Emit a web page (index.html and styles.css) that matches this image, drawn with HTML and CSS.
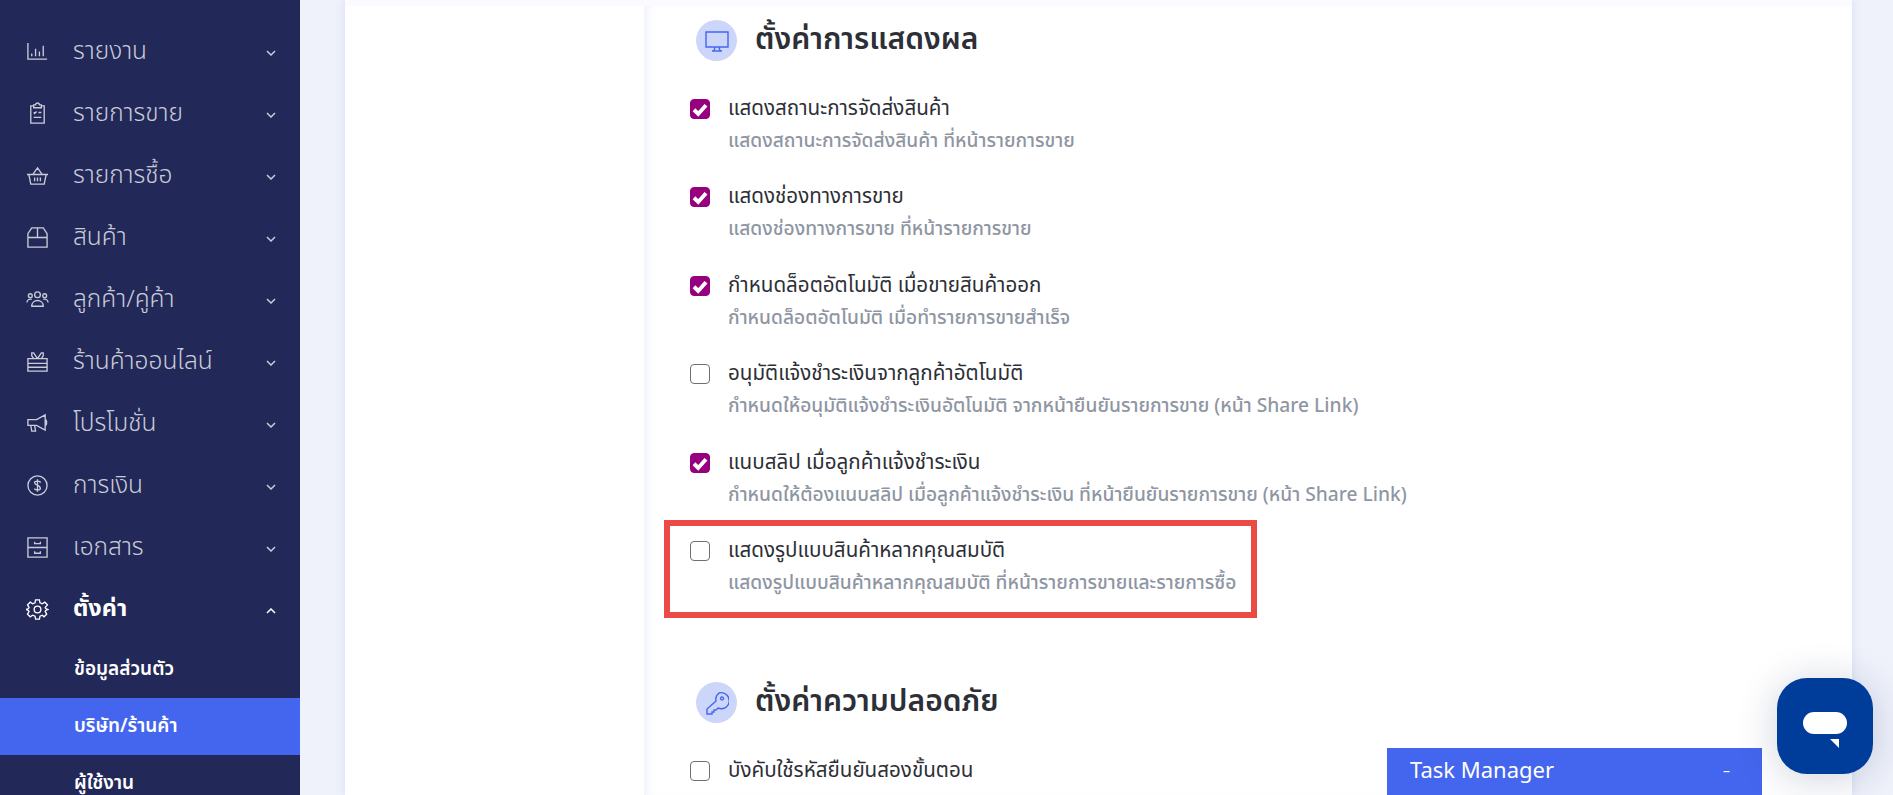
FILE: index.html
```html
<!DOCTYPE html>
<html lang="th">
<head>
  <meta charset="UTF-8" />
  <title>ตั้งค่า</title>
  <link rel="stylesheet" href="styles.css">
</head>
<body>
  <aside class="sidebar">
    <a class="nav-item"><svg class="nav-icon" viewBox="0 0 24 24"><path d="M2 3v17h20M6 17v-3M10 17V9M14 17v-5M18 17V6"/></svg><span class="nav-label">รายงาน</span><svg class="chev" viewBox="0 0 10 6"><path d="M1 1l4 4 4-4"/></svg></a>
    <a class="nav-item"><svg class="nav-icon" viewBox="0 0 24 24"><path d="M8 4H5v18h14V4h-3M8 3h2a2 2 0 0 1 4 0h2v3H8zM8 11l1 1 2-2M13 11h3M8 16h8"/></svg><span class="nav-label">รายการขาย</span><svg class="chev" viewBox="0 0 10 6"><path d="M1 1l4 4 4-4"/></svg></a>
    <a class="nav-item"><svg class="nav-icon" viewBox="0 0 24 24"><path d="M1 11h22M3 11l2 10h14l2-10M7 11l5-7 5 7M9 14v4M12 14v4M15 14v4"/></svg><span class="nav-label">รายการชื้อ</span><svg class="chev" viewBox="0 0 10 6"><path d="M1 1l4 4 4-4"/></svg></a>
    <a class="nav-item"><svg class="nav-icon" viewBox="0 0 24 24"><path d="M2 12h20M6 2h12l4 6v14H2V8zM12 2v10"/></svg><span class="nav-label">สินค้า</span><svg class="chev" viewBox="0 0 10 6"><path d="M1 1l4 4 4-4"/></svg></a>
    <a class="nav-item"><svg class="nav-icon wide" viewBox="0 0 24 24"><circle cx="12" cy="7" r="3"/><circle cx="4.500" cy="8" r="2"/><circle cx="19.500" cy="8" r="2"/><path d="M6 19c0-8 12-8 12 0zM1 15c0-3 3-4 5-3M23 15c0-3-3-4-5-3"/></svg><span class="nav-label">ลูกค้า/คู่ค้า</span><svg class="chev" viewBox="0 0 10 6"><path d="M1 1l4 4 4-4"/></svg></a>
    <a class="nav-item"><svg class="nav-icon" viewBox="0 0 24 24"><path d="M2 9h20v13H2zM2 14h20M2 18h20M12 9L8 3H6v3l2 3M12 9l4-6h2v3l-2 3"/></svg><span class="nav-label">ร้านค้าออนไลน์</span><svg class="chev" viewBox="0 0 10 6"><path d="M1 1l4 4 4-4"/></svg></a>
    <a class="nav-item"><svg class="nav-icon" viewBox="0 0 24 24"><path d="M2 8h9l9-5v16l-9-5H2zM5 14l1 6h4l-1-6M20 8c2 0 2 6 0 6"/></svg><span class="nav-label">โปรโมชั่น</span><svg class="chev" viewBox="0 0 10 6"><path d="M1 1l4 4 4-4"/></svg></a>
    <a class="nav-item"><svg class="nav-icon" viewBox="0 0 24 24"><circle cx="12" cy="12" r="10"/><path d="M15 9c0-2-6-2-6 0 0 3 6 2 6 6 0 2-6 2-6 0M12 5.500v13"/></svg><span class="nav-label">การเงิน</span><svg class="chev" viewBox="0 0 10 6"><path d="M1 1l4 4 4-4"/></svg></a>
    <a class="nav-item"><svg class="nav-icon" viewBox="0 0 24 24"><path d="M2 2h20v20H2zM2 12h20M9 6v2h6V6M9 16v2h6v-2"/></svg><span class="nav-label">เอกสาร</span><svg class="chev" viewBox="0 0 10 6"><path d="M1 1l4 4 4-4"/></svg></a>
    <a class="nav-item open"><svg class="nav-icon" viewBox="0 0 24 24"><circle cx="12" cy="12" r="3.500"/><path d="M10 2h4l.6 3 2.400 1 2.600-1.600 2.800 2.800L20 10l.6 1 2.400 1-2.400 1-.6 1 1.600 2.800-2.800 2.800L17 18l-2.400 1-.6 3h-4l-.6-3L7 18l-2.600 1.600-2.800-2.800L3.200 14l-.6-1L.2 12l2.400-1 .6-1-1.600-2.800 2.800-2.800L7 6l2.400-1z"/></svg><span class="nav-label">ตั้งค่า</span><svg class="chev" viewBox="0 0 10 6"><path d="M1 5l4-4 4 4"/></svg></a>
    <a class="sub-item">ข้อมูลส่วนตัว</a>
    <a class="sub-item active">บริษัท/ร้านค้า</a>
    <a class="sub-item last">ผู้ใช้งาน</a>
  </aside>

  <main class="page">
    <div class="panel">
      <div class="panel-side"></div>
      <div class="panel-body">
        <section class="group">
          <div class="group-head">
            <span class="round-icon"><svg viewBox="0 0 24 24"><path d="M1 3h22v15H1zM9 22l1-4h4l1 4M7 22h10"/></svg></span>
            <h2>ตั้งค่าการแสดงผล</h2>
          </div>
          <div class="opt"><span class="box on"><svg viewBox="0 0 12 12"><path d="M2 6.500l2.800 2.800L10 3.500"/></svg></span><div><p class="opt-title">แสดงสถานะการจัดส่งสินค้า</p><p class="opt-desc">แสดงสถานะการจัดส่งสินค้า ที่หน้ารายการขาย</p></div></div>
          <div class="opt"><span class="box on"><svg viewBox="0 0 12 12"><path d="M2 6.500l2.800 2.800L10 3.500"/></svg></span><div><p class="opt-title">แสดงช่องทางการขาย</p><p class="opt-desc">แสดงช่องทางการขาย ที่หน้ารายการขาย</p></div></div>
          <div class="opt"><span class="box on"><svg viewBox="0 0 12 12"><path d="M2 6.500l2.800 2.800L10 3.500"/></svg></span><div><p class="opt-title">กำหนดล็อตอัตโนมัติ เมื่อขายสินค้าออก</p><p class="opt-desc">กำหนดล็อตอัตโนมัติ เมื่อทำรายการขายสำเร็จ</p></div></div>
          <div class="opt"><span class="box"></span><div><p class="opt-title">อนุมัติแจ้งชำระเงินจากลูกค้าอัตโนมัติ</p><p class="opt-desc">กำหนดให้อนุมัติแจ้งชำระเงินอัตโนมัติ จากหน้ายืนยันรายการขาย (หน้า Share Link)</p></div></div>
          <div class="opt"><span class="box on"><svg viewBox="0 0 12 12"><path d="M2 6.500l2.800 2.800L10 3.500"/></svg></span><div><p class="opt-title">แนบสลิป เมื่อลูกค้าแจ้งชำระเงิน</p><p class="opt-desc">กำหนดให้ต้องแนบสลิป เมื่อลูกค้าแจ้งชำระเงิน ที่หน้ายืนยันรายการขาย (หน้า Share Link)</p></div></div>
          <div class="opt marked"><span class="box"></span><div><p class="opt-title">แสดงรูปแบบสินค้าหลากคุณสมบัติ</p><p class="opt-desc">แสดงรูปแบบสินค้าหลากคุณสมบัติ ที่หน้ารายการขายและรายการซื้อ</p></div></div>
        </section>
        <section class="group second">
          <div class="group-head">
            <span class="round-icon"><svg viewBox="0 0 24 24"><path d="M14 2a8 8 0 1 1-1 15l-2 2H9v2H7v2H2v-5l9-8a8 8 0 0 1 3-8zM17 6a1.500 1.500 0 1 0 .01 0z"/></svg></span>
            <h2>ตั้งค่าความปลอดภัย</h2>
          </div>
          <div class="opt"><span class="box"></span><div><p class="opt-title">บังคับใช้รหัสยืนยันสองขั้นตอน</p></div></div>
        </section>
      </div>
    </div>
  </main>

  <div class="task-bar"><span>Task Manager</span><span class="task-min">–</span></div>
  <button class="chat-btn" type="button" aria-label="Chat">
    <svg viewBox="0 0 44 36"><rect x="0" y="0" width="44" height="22" rx="11"/><path d="M27 27h9v9z"/></svg>
  </button>
</body>
</html>
```

FILE: styles.css
```css
*, *::after {
  box-sizing: border-box;
}

html, body {
  height: 795px;
  overflow: hidden;
}

body {
  margin: 0;
  display: flex;
  background: #eff2fb;
  font-family: "Noto Sans Thai", "Noto Sans", "Inter", sans-serif;
  color: #2d2f36;
}

p, h2 {
  margin: 0;
}

.sidebar {
  width: 300px;
  height: 795px;
  flex-shrink: 0;
  overflow: hidden;
  padding-top: 20px;
  background: #222858;
  color: #c9ccd8;
}

.nav-item {
  display: flex;
  align-items: center;
  height: 62px;
  padding: 0 24px 0 26px;
  font-size: 24.500px;
  font-weight: 300;
}

.nav-icon {
  width: 23px;
  height: 23px;
  margin-right: 24px;
  fill: none;
  stroke: currentColor;
  stroke-width: 1.400;
}

.nav-icon.wide {
  width: 27px;
  margin: 0 22px 0 -2px;
}

.nav-label {
  flex: 1;
}

.chev {
  width: 10px;
  height: 6px;
  margin-top: 4px;
  fill: none;
  stroke: currentColor;
  stroke-width: 1.500;
}

.nav-item.open {
  margin-bottom: 1px;
  color: #fff;
  font-weight: 700;
  font-size: 23.500px;
}

.sub-item {
  display: flex;
  align-items: center;
  height: 57px;
  padding-left: 74px;
  font-size: 19px;
  font-weight: 600;
  color: #fff;
}

.sub-item.active {
  background: #4466ee;
}

.page {
  flex: 1;
  height: 795px;
  padding: 0 41px 0 45px;
}

.panel {
  display: flex;
  height: 100%;
  border-top: 6px solid #fafaff;
  background: #fff;
  box-shadow: 0 0 9px rgba(90, 110, 230, 0.16);
}

.panel-side {
  width: 299px;
}

.panel-body {
  flex: 1;
  padding: 0 0 0 46px;
  box-shadow: inset 9px 0 8px -6px rgba(90, 110, 230, 0.1);
}

.group-head {
  display: flex;
  align-items: center;
  height: 41px;
  margin: 14px 0 29px 6px;
  gap: 18px;
}

.second .group-head {
  margin-top: 0;
  margin-bottom: 29px;
}

.group-head h2 {
  font-size: 30px;
  font-weight: 600;
  line-height: 41px;
}

.round-icon {
  display: flex;
  align-items: center;
  justify-content: center;
  width: 41px;
  height: 41px;
  border-radius: 50%;
  background: #ccd6fa;
}

.round-icon svg {
  width: 24px;
  height: 24px;
  fill: none;
  stroke: #4466ee;
  stroke-width: 1.400;
}

.opt {
  display: flex;
  gap: 18px;
  height: 88.400px;
}

.second .opt {
  height: 40px;
}

.box {
  flex-shrink: 0;
  width: 20px;
  height: 20px;
  margin-top: 9px;
  border: 1.500px solid #707070;
  border-radius: 4px;
  background: #fff;
}

.box.on {
  border-color: #96007f;
  background: #96007f;
}

.box svg {
  display: block;
  fill: none;
  stroke: #fff;
  stroke-width: 2.600;
}

.opt-title {
  font-size: 20.600px;
  line-height: 37px;
}

.opt-desc {
  margin-top: 2px;
  font-size: 19.200px;
  font-weight: 500;
  line-height: 26px;
  color: #8f96a3;
}

.marked {
  position: relative;
}

.marked::after {
  content: "";
  position: absolute;
  left: -26px;
  top: -12px;
  width: 593px;
  height: 98px;
  border: 6px solid #ea4b44;
}

.second {
  margin-top: 62px;
}

.task-bar {
  position: fixed;
  left: 1387px;
  bottom: 0;
  display: flex;
  justify-content: space-between;
  align-items: center;
  width: 375px;
  height: 47px;
  padding: 0 32px 0 23px;
  background: #4466ee;
  color: #fff;
  font-size: 22px;
}

.task-min {
  font-size: 14px;
}

.chat-btn {
  position: fixed;
  right: 20px;
  bottom: 21px;
  display: flex;
  align-items: center;
  justify-content: center;
  width: 96px;
  height: 96px;
  padding: 0;
  border: none;
  border-radius: 30px;
  background: #003d9b;
  box-shadow: 0 4px 40px rgba(0, 30, 80, 0.2);
}

.chat-btn svg {
  width: 44px;
  height: 36px;
  margin-top: 8px;
  fill: #fff;
}
```
